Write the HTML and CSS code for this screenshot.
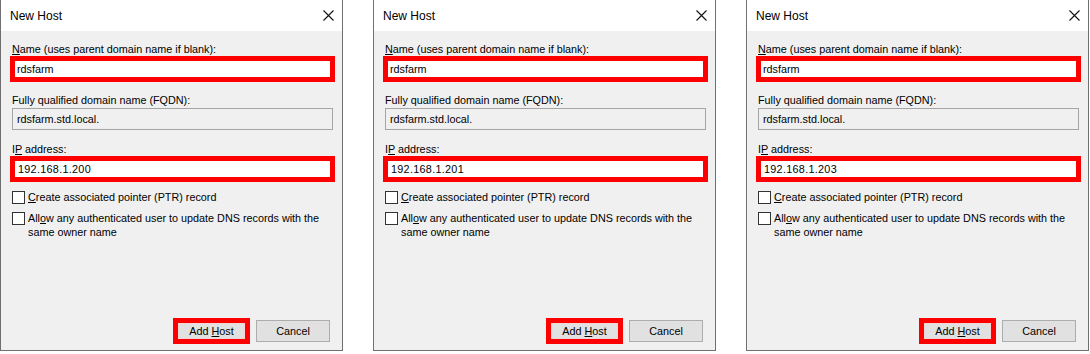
FILE: index.html
```html
<!DOCTYPE html>
<html>
<head>
<meta charset="utf-8">
<link rel="stylesheet" href="styles.css">
</head>
<body>
<div class="screen">
  <div class="dialog">
    <div class="titlebar">
      <span class="title">New Host</span>
      <svg class="close" width="11" height="11" viewBox="0 0 11 11"><path d="M0.5 0.5L10.5 10.5M10.5 0.5L0.5 10.5" stroke="#111" stroke-width="1.1" fill="none"/></svg>
    </div>
    <div class="body">
      <div class="label l-name"><u>N</u>ame (uses parent domain name if blank):</div>
      <div class="field hl">rdsfarm</div>
      <div class="label l-fqdn">Fully qualified domain name (FQDN):</div>
      <div class="field ro">rdsfarm.std.local.</div>
      <div class="label l-ip">I<u>P</u> address:</div>
      <div class="field hl ip">192.168.1.200</div>
      <div class="check c1"><span class="box"></span><span class="ctext"><span class="line"><u>C</u>reate associated pointer (PTR) record</span></span></div>
      <div class="check c2"><span class="box"></span><span class="ctext"><span class="line">All<u>o</u>w any authenticated user to update DNS records with the</span><span class="line">same owner name</span></span></div>
      <div class="buttons">
        <div class="btn-hl"><span class="btn inner"><span>Add <u>H</u>ost</span></span></div>
        <span class="btn"><span>Cancel</span></span>
      </div>
    </div>
  </div>
  <div class="dialog">
    <div class="titlebar">
      <span class="title">New Host</span>
      <svg class="close" width="11" height="11" viewBox="0 0 11 11"><path d="M0.5 0.5L10.5 10.5M10.5 0.5L0.5 10.5" stroke="#111" stroke-width="1.1" fill="none"/></svg>
    </div>
    <div class="body">
      <div class="label l-name"><u>N</u>ame (uses parent domain name if blank):</div>
      <div class="field hl">rdsfarm</div>
      <div class="label l-fqdn">Fully qualified domain name (FQDN):</div>
      <div class="field ro">rdsfarm.std.local.</div>
      <div class="label l-ip">I<u>P</u> address:</div>
      <div class="field hl ip">192.168.1.201</div>
      <div class="check c1"><span class="box"></span><span class="ctext"><span class="line"><u>C</u>reate associated pointer (PTR) record</span></span></div>
      <div class="check c2"><span class="box"></span><span class="ctext"><span class="line">All<u>o</u>w any authenticated user to update DNS records with the</span><span class="line">same owner name</span></span></div>
      <div class="buttons">
        <div class="btn-hl"><span class="btn inner"><span>Add <u>H</u>ost</span></span></div>
        <span class="btn"><span>Cancel</span></span>
      </div>
    </div>
  </div>
  <div class="dialog">
    <div class="titlebar">
      <span class="title">New Host</span>
      <svg class="close" width="11" height="11" viewBox="0 0 11 11"><path d="M0.5 0.5L10.5 10.5M10.5 0.5L0.5 10.5" stroke="#111" stroke-width="1.1" fill="none"/></svg>
    </div>
    <div class="body">
      <div class="label l-name"><u>N</u>ame (uses parent domain name if blank):</div>
      <div class="field hl">rdsfarm</div>
      <div class="label l-fqdn">Fully qualified domain name (FQDN):</div>
      <div class="field ro">rdsfarm.std.local.</div>
      <div class="label l-ip">I<u>P</u> address:</div>
      <div class="field hl ip">192.168.1.203</div>
      <div class="check c1"><span class="box"></span><span class="ctext"><span class="line"><u>C</u>reate associated pointer (PTR) record</span></span></div>
      <div class="check c2"><span class="box"></span><span class="ctext"><span class="line">All<u>o</u>w any authenticated user to update DNS records with the</span><span class="line">same owner name</span></span></div>
      <div class="buttons">
        <div class="btn-hl"><span class="btn inner"><span>Add <u>H</u>ost</span></span></div>
        <span class="btn"><span>Cancel</span></span>
      </div>
    </div>
  </div>
</div>
</body>
</html>
```

FILE: styles.css
```css
html, body {
  margin: 0;
  padding: 0;
  background: #ffffff;
}
body {
  font-family: "Liberation Sans", Arial, sans-serif;
  font-size: 10.8px;
  color: #000;
  width: 1090px;
  height: 354px;
  overflow: hidden;
}
.screen {
  display: flex;
  gap: 30px;
  align-items: flex-start;
}
.dialog {
  width: 343px;
  height: 351px;
  box-sizing: border-box;
  border: 1px solid #707070;
  border-top: none;
  background: #f0f0f0;
  display: flex;
  flex-direction: column;
  flex: none;
}
.titlebar {
  height: 31px;
  background: #ffffff;
  display: flex;
  align-items: center;
  justify-content: space-between;
  padding: 0 8px 0 9px;
  flex: none;
}
.title {
  font-size: 12px;
  color: #000;
  margin-top: 1px;
}
.close {
  display: block;
}
.body {
  flex: 1;
  display: flex;
  flex-direction: column;
  padding: 0 9px 0 11px;
}
.label {
  line-height: 14px;
  height: 14px;
  white-space: nowrap;
}
.l-name { margin-top: 11px; }
.l-fqdn { margin-top: 11px; }
.l-ip { margin-top: 12px; }
u {
  text-decoration: underline;
  text-underline-offset: 1px;
  text-decoration-thickness: 1px;
}
.field {
  box-sizing: border-box;
  white-space: nowrap;
}
.field.hl {
  margin: 0 -2px;
  height: 26px;
  border: 5px solid #ff0000;
  background: #ffffff;
  line-height: 16px;
  padding-left: 2px;
}
.field.ip {
  padding-left: 3px;
  letter-spacing: 0.3px;
  line-height: 17px;
}
.field.ro {
  margin-top: 1px;
  height: 22px;
  border: 1px solid #a5a5a5;
  background: #f0f0f0;
  line-height: 20px;
  padding-left: 4px;
}
.check {
  display: flex;
  align-items: flex-start;
  line-height: 14px;
}
.c1 { margin-top: 8px; }
.c2 { margin-top: 7px; }
.box {
  width: 13px;
  height: 13px;
  box-sizing: border-box;
  border: 1px solid #333333;
  background: #ffffff;
  flex: none;
  margin-top: 1px;
  margin-right: 3px;
}
.ctext {
  display: flex;
  flex-direction: column;
}
.line {
  display: block;
  white-space: nowrap;
}
.buttons {
  margin-top: auto;
  margin-bottom: 6px;
  margin-right: 3px;
  display: flex;
  justify-content: flex-end;
  align-items: center;
  gap: 6px;
  height: 26px;
}
.btn-hl {
  box-sizing: border-box;
  width: 77px;
  height: 26px;
  border: 5px solid #ff0000;
  display: flex;
}
.btn {
  box-sizing: border-box;
  width: 74px;
  height: 22px;
  border: 1px solid #adadad;
  background: #e1e1e1;
  display: flex;
  align-items: center;
  justify-content: center;
  line-height: 13px;
  white-space: nowrap;
}
.btn.inner {
  width: 100%;
  height: 100%;
  border: 1px solid #f2d6d6;
}
```
